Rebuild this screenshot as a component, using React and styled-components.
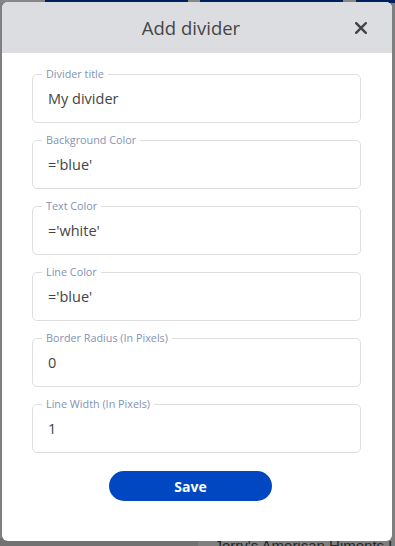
import React, { useState } from "react";
import styled, { createGlobalStyle } from "styled-components";

const GlobalStyle = createGlobalStyle`
  html, body {
    margin: 0;
    padding: 0;
    height: 100%;
    overflow: hidden;
    font-family: "Open Sans", "Noto Sans", sans-serif;
  }
  #root {
    height: 100%;
  }
`;

const fieldsList = [
  { name: "title", label: "Divider title", value: "My divider" },
  { name: "background", label: "Background Color", value: "='blue'" },
  { name: "text", label: "Text Color", value: "='white'" },
  { name: "line", label: "Line Color", value: "='blue'" },
  { name: "radius", label: "Border Radius (In Pixels)", value: "0" },
  { name: "width", label: "Line Width (In Pixels)", value: "1" },
];

function App() {
  const [data, setData] = useState(
    Object.fromEntries(fieldsList.map((f) => [f.name, f.value]))
  );

  const handleChange = (e) => {
    setData({ ...data, [e.target.name]: e.target.value });
  };

  return (
    <Page>
      <GlobalStyle />
      <TopTabs>
        <Tab $w={45} />
        <Tab $navy $w={143} />
        <Tab $w={12} />
        <Tab $navy $w={143} />
        <Tab $w={13} />
        <Tab $navy $w={39} />
      </TopTabs>
      <Filler />
      <BottomStrip>
        <BottomHalf $dark />
        <BottomHalf>
          <BgText>Jerry's American Himents Lost</BgText>
        </BottomHalf>
      </BottomStrip>

      <Backdrop>
        <Modal>
          <Header>
            <Title>Add divider</Title>
            <CloseButton aria-label="Close">
              <svg width="12" height="12" viewBox="0 0 12 12">
                <path
                  d="M1.2 1.2 L10.8 10.8 M10.8 1.2 L1.2 10.8"
                  stroke="#444"
                  strokeWidth="2.4"
                  strokeLinecap="square"
                />
              </svg>
            </CloseButton>
          </Header>
          <Form onSubmit={(e) => e.preventDefault()}>
            {fieldsList.map((f) => (
              <Field key={f.name}>
                <Legend>{f.label}</Legend>
                <Input
                  type="text"
                  name={f.name}
                  value={data[f.name]}
                  onChange={handleChange}
                />
              </Field>
            ))}
            <SaveButton type="submit">Save</SaveButton>
          </Form>
        </Modal>
      </Backdrop>
    </Page>
  );
}

export default App;

const Page = styled.div`
  position: relative;
  height: 100%;
  display: flex;
  flex-direction: column;
  background: #7f7f7f;
`;

const TopTabs = styled.div`
  display: flex;
  height: 3px;
`;

const Tab = styled.div`
  width: ${(p) => p.$w}px;
  flex-shrink: 0;
  background: ${(p) => (p.$navy ? "#01215e" : "#878787")};
`;

const Filler = styled.div`
  flex: 1;
`;

const BottomStrip = styled.div`
  display: flex;
  height: 8px;
  overflow: hidden;
`;

const BottomHalf = styled.div`
  flex: 1;
  background: ${(p) => (p.$dark ? "#727272" : "#7f7f7f")};
  overflow: hidden;
`;

const BgText = styled.div`
  padding-left: 17px;
  margin-top: -1px;
  font-family: "Liberation Sans", Arial, sans-serif;
  font-size: 15px;
  line-height: 18px;
  color: #262626;
  white-space: nowrap;
`;

const Backdrop = styled.div`
  position: absolute;
  inset: 0;
  padding: 2px 3px 5px 2px;
  display: flex;
`;

const Modal = styled.div`
  flex: 1;
  display: flex;
  flex-direction: column;
  background: #fff;
  border-radius: 6px;
  overflow: hidden;
`;

const Header = styled.div`
  height: 51px;
  flex-shrink: 0;
  display: flex;
  align-items: center;
  padding: 0 25px;
  background: #dcdde0;
`;

const Title = styled.h2`
  flex: 1;
  margin: 0;
  text-align: center;
  font-size: 18.5px;
  font-weight: 400;
  color: #464646;
`;

const CloseButton = styled.button`
  width: 12px;
  height: 12px;
  padding: 0;
  border: none;
  background: none;
  display: flex;
  cursor: pointer;
`;

const Form = styled.form`
  display: flex;
  flex-direction: column;
  gap: 11px;
  padding: 15px 31px 0 30px;
`;

const Field = styled.fieldset`
  margin: 0;
  padding: 0 15px 5px;
  border: 1px solid #dedede;
  border-radius: 5px;
  min-width: 0;
`;

const Legend = styled.legend`
  margin-left: -6px;
  padding: 0 4px;
  font-size: 10.8px;
  line-height: 12px;
  color: #8293b5;
`;

const Input = styled.input`
  display: block;
  width: 100%;
  height: 37px;
  padding: 0;
  border: none;
  outline: none;
  background: transparent;
  font-family: inherit;
  font-size: 14.5px;
  color: #444;
`;

const SaveButton = styled.button`
  align-self: center;
  width: 163px;
  height: 30px;
  margin: 7px 12px 0 0;
  border: none;
  border-radius: 15px;
  background: #0047c1;
  color: #fff;
  font-family: inherit;
  font-size: 14px;
  font-weight: 700;
  cursor: pointer;
`;
